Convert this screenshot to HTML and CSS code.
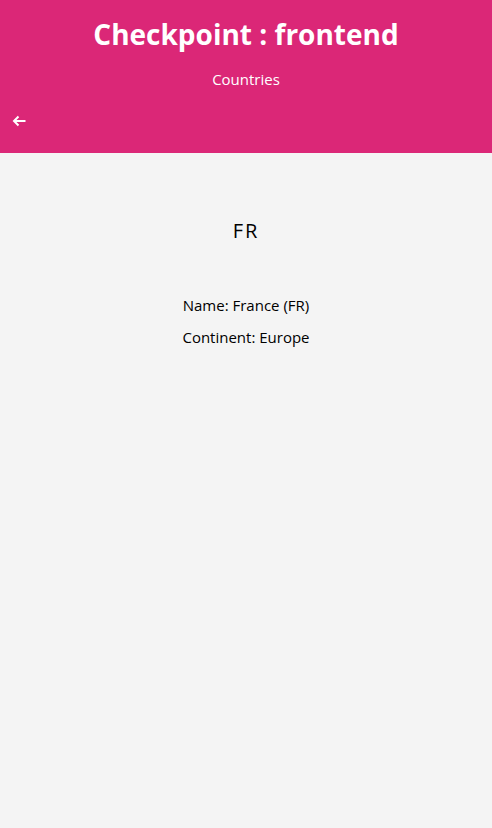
FILE: index.html
```html
<!DOCTYPE html>
<html>
<head>
<meta charset="utf-8">
<link rel="stylesheet" href="styles.css">
</head>
<body>
<header class="header">
  <h1 class="title">Checkpoint : frontend</h1>
  <div class="subtitle">Countries</div>
  <div class="nav">
    <svg class="back" width="14" height="12" viewBox="0 0 14 12"><path d="M13.5 6H2M6.5 1.5L2 6l4.5 4.5" fill="none" stroke="#fff" stroke-width="2"/></svg>
  </div>
</header>
<main class="content">
  <div class="code">FR</div>
  <div class="details">
    <p class="line">Name: France (FR)</p>
    <p class="line">Continent: Europe</p>
  </div>
</main>
</body>
</html>
```
FILE: styles.css
```css
html, body { margin: 0; padding: 0; }
body {
  background: #f4f4f4;
  font-family: "Open Sans", "Noto Sans", sans-serif;
  color: #000;
  min-height: 828px;
}
.header {
  background: #db2777;
  color: #fff;
  height: 153px;
  box-sizing: border-box;
  padding-top: 14px;
  display: flex;
  flex-direction: column;
  align-items: center;
}
.title {
  margin: 0;
  font-size: 28px;
  line-height: 40px;
  font-weight: 700;
}
.subtitle {
  margin-top: 13px;
  font-size: 15px;
  line-height: 24px;
}
.nav {
  align-self: stretch;
  padding: 20px 12px 0;
  height: 20px;
  display: flex;
  align-items: center;
}
.back { display: block; }
.content {
  display: flex;
  flex-direction: column;
  align-items: center;
  padding-top: 64px;
}
.code {
  font-size: 20px;
  letter-spacing: 2px;
  line-height: 28px;
}
.details { margin-top: 48px; text-align: center; }
.line { margin: 0 0 8px; font-size: 15px; line-height: 24px; }
```
